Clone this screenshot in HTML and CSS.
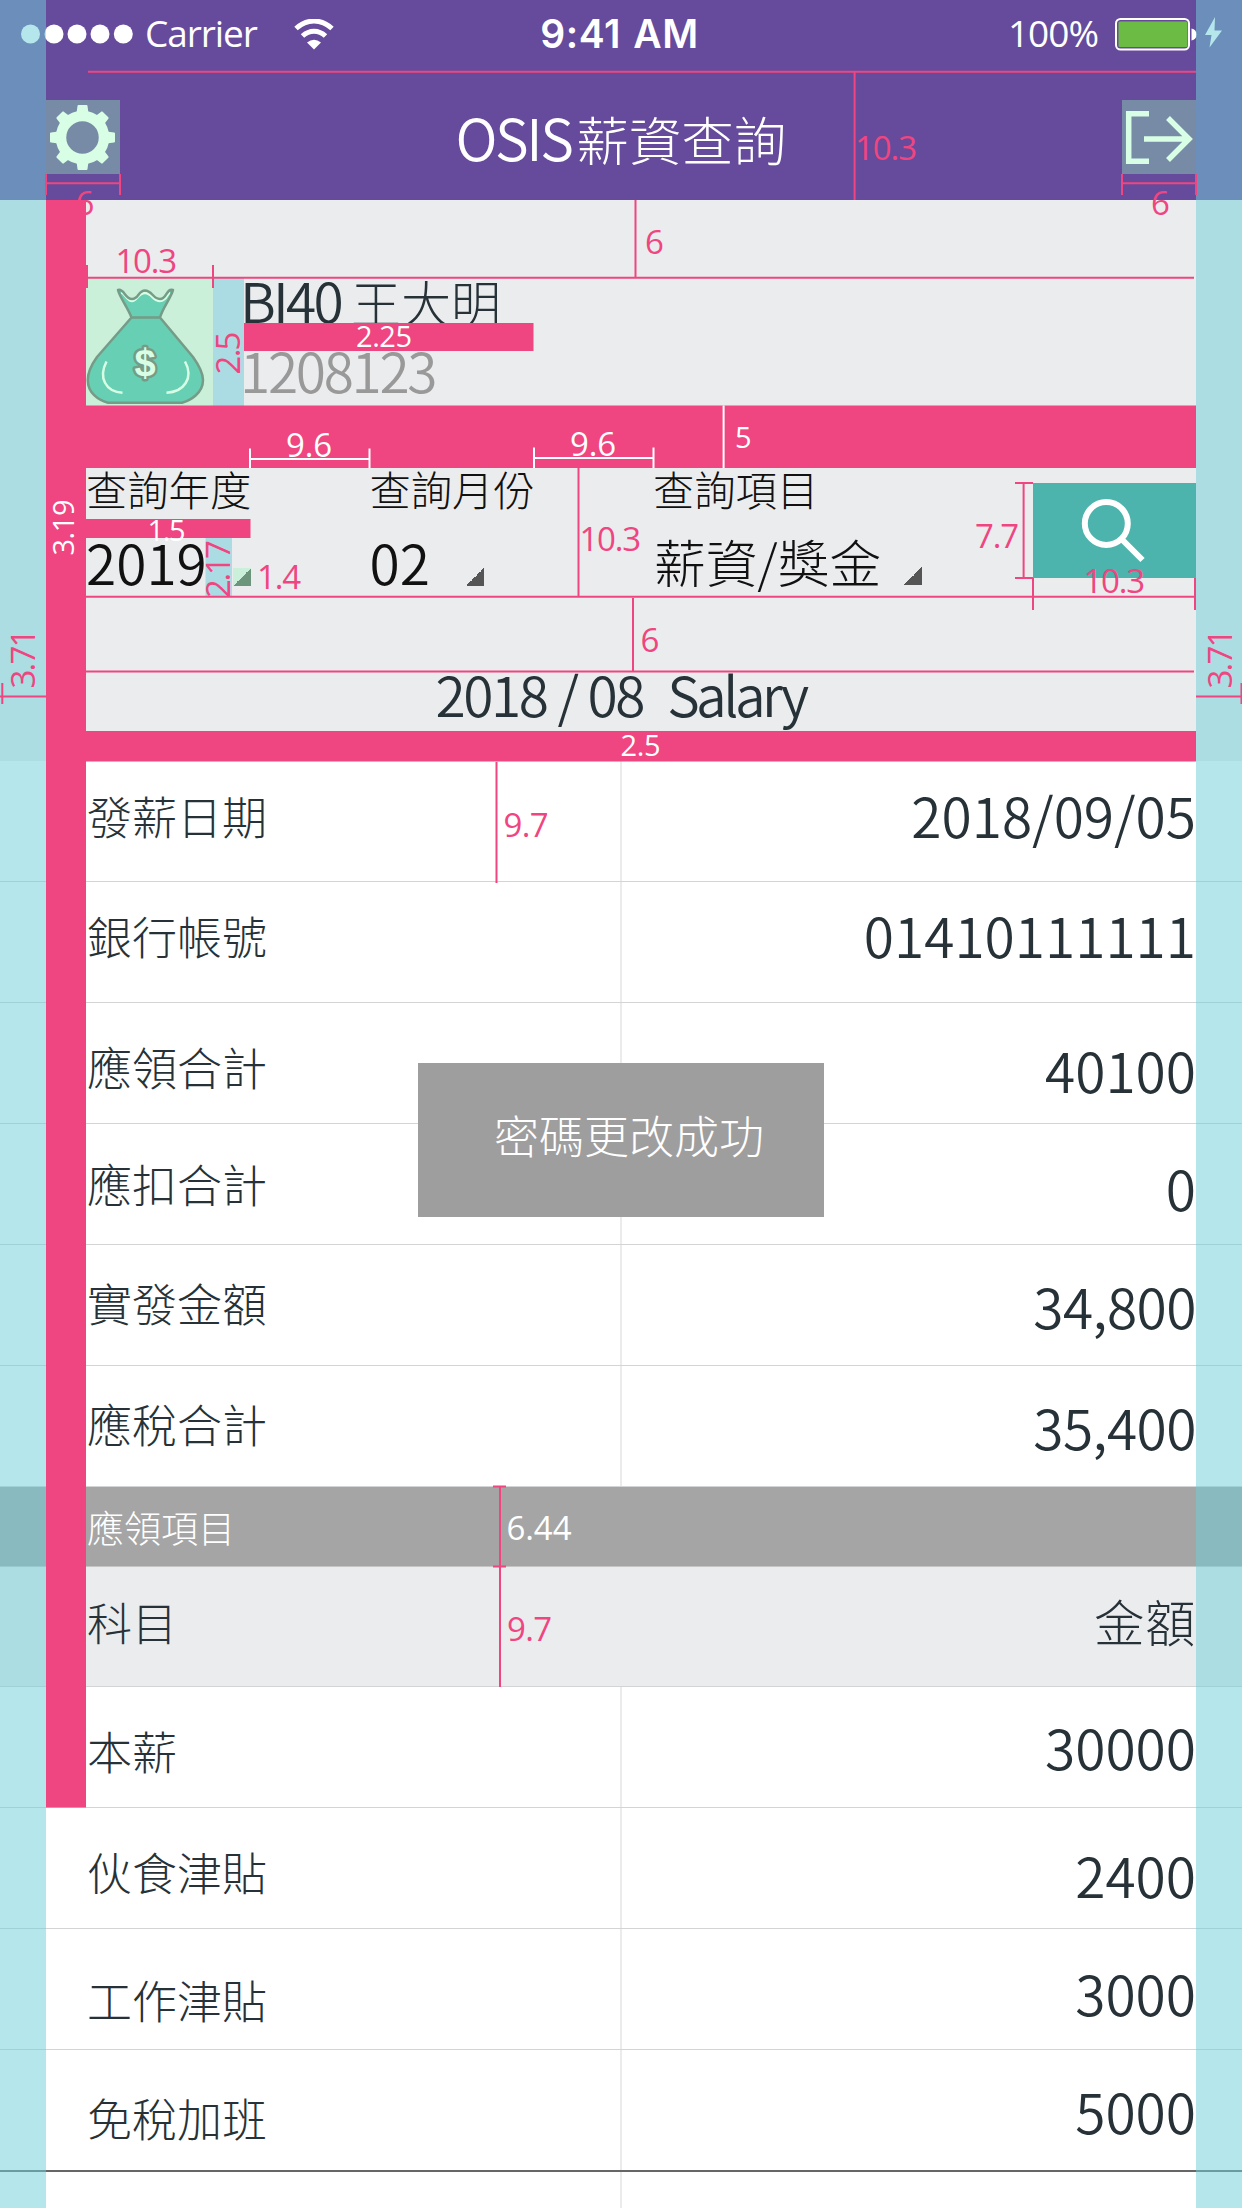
FILE: index.html
```html
<!DOCTYPE html>
<html lang="zh-Hant">
<head>
<meta charset="utf-8">
<title>OSIS薪資查詢</title>
<link rel="stylesheet" href="styles.css">
</head>
<body>
<div class="screen">
  <header class="header">
    <div class="status">
      <div class="status-left">
        <svg class="signal" width="114" height="20" viewBox="0 0 114 20"><circle cx="9.5" cy="10" r="9.5"/><circle cx="33" cy="10" r="9.5"/><circle cx="56" cy="10" r="9.5"/><circle cx="79" cy="10" r="9.5"/><circle cx="102.3" cy="10" r="9.5"/></svg>
        <span class="carrier">Carrier</span>
        <svg class="wifi" width="40" height="31" viewBox="0 0 40 31"><path d="M2 9.5C13-.5 27-.5 38 9.500" fill="none" stroke="#fff" stroke-width="5"/><path d="M8.500 17C15.500 10.500 24.500 10.500 31.500 17" fill="none" stroke="#fff" stroke-width="5"/><path d="M13 23.500Q20 18 27 23.500L20 30.500Z" fill="#fff"/></svg>
      </div>
      <div class="clock">9:41 AM</div>
      <div class="status-right">
        <span class="percent">100%</span>
        <svg class="battery" width="107" height="34" viewBox="0 0 107 34"><rect x="1" y="2" width="73" height="30.500" rx="4.500" fill="none" stroke="#fff" stroke-width="2"/><rect x="3.500" y="4.500" width="69" height="25.500" rx="1.500" fill="#6cbb45"/><path d="M76.500 11.500q5 1 5 6t-5 6z" fill="#fff"/><path d="M100 0L90 18H96.500L94.500 30.500L107 13.500H99.500Z" fill="#fff"/></svg>
      </div>
    </div>
    <nav class="navbar">
      <button class="tool" aria-label="設定">
        <svg width="74" height="74" viewBox="-36.500 -37.500 74 74">
          <g fill="#d8ffe5">
            <g id="teeth"><path id="tooth" d="M-6-24L-5-31.500Q-5-32.500-4-32.500H4Q5-32.500 5-31.500L6-24Z"/><use href="#tooth" transform="rotate(45)"/><use href="#tooth" transform="rotate(90)"/><use href="#tooth" transform="rotate(135)"/></g>
            <use href="#teeth" transform="rotate(180)"/>
          </g>
          <circle r="21.500" fill="none" stroke="#d8ffe5" stroke-width="10.500"/>
        </svg>
      </button>
      <h1 class="nav-title"><span class="latin">OSIS</span>薪資查詢</h1>
      <button class="tool" aria-label="登出">
        <svg width="74" height="74" viewBox="0 0 74 74" fill="none" stroke="#d8ffe5" stroke-width="5.500"><path d="M27 13.700H6.700V61.200H27M22 39H66M46 18L67 39L46 60"/></svg>
      </button>
    </nav>
  </header>

  <section class="summary">
    <div class="profile">
      <div class="avatar">
        <svg width="127" height="128" viewBox="86 278 127 128">
          <path d="M131.500 317.500C127 306 120 298 118 290C124 288 125 299 132 299S138 290.500 145 290.500S153 299 160 299S166 288 173 290C171 298 163 307 160 317.500L193 357C198 364 203 373 203 380C203 393 191 400 182 402.800H108C98 400 87.800 393 87.800 380C87.800 373 92 364 97 357Z" fill="#67cfb3"/>
          <path d="M121 292.500C125 293 127 301 132 301S138 293 145 293S153 301 160 301S167 293 170 292.500" fill="none" stroke="#d8ffe5" stroke-width="2.500"/>
          <path d="M131.500 317.500C127 306 120 298 118 290C124 288 125 299 132 299S138 290.500 145 290.500S153 299 160 299S166 288 173 290C171 298 163 307 160 317.500L193 357C198 364 203 373 203 380C203 393 191 400 182 402.800H108C98 400 87.800 393 87.800 380C87.800 373 92 364 97 357L131.500 317.500H160" fill="none" stroke="#769b87" stroke-width="2.500" stroke-linejoin="round"/>
          <path d="M106.500 361.500C98 378 106 392 122.500 392.700M185 361.500C194 378 184 392 166.500 392.700" fill="none" stroke="#d8ffe5" stroke-width="2.500"/>
          <text class="dollar" x="145" y="375.500">$</text>
        </svg>
      </div>
      <div class="identity">
        <div class="name"><span class="name-code">BI40</span> 王大明</div>
        <div class="staff-no">1208123</div>
      </div>
    </div>
    <div class="filters">
      <div class="filter filter-year"><div class="filter-label">查詢年度</div><div class="filter-value">2019<i class="corner corner-tint"></i></div></div>
      <div class="filter filter-month"><div class="filter-label">查詢月份</div><div class="filter-value">02<i class="corner"></i></div></div>
      <div class="filter filter-item"><div class="filter-label">查詢項目</div><div class="filter-value"><span class="filter-text">薪資/獎金</span><i class="corner"></i></div></div>
      <button class="search" aria-label="查詢">
        <svg width="163" height="95" viewBox="1033 483 163 95" fill="none" stroke="#fff" stroke-width="6"><circle cx="1106.300" cy="523.500" r="21.500"/><path d="M1121 538.500L1142.500 560"/></svg>
      </button>
    </div>
    <h2 class="period"><span class="period-date">2018 / 08</span><span class="period-kind">Salary</span></h2>
  </section>

  <main class="sheet">
    <div class="row r1"><span class="label">發薪日期</span><span class="value">2018/09/05</span></div>
    <div class="row r2"><span class="label">銀行帳號</span><span class="value">01410111111</span></div>
    <div class="row r3"><span class="label">應領合計</span><span class="value">40100</span></div>
    <div class="row r4"><span class="label">應扣合計</span><span class="value">0</span></div>
    <div class="row r5"><span class="label">實發金額</span><span class="value money">34,800</span></div>
    <div class="row r6"><span class="label">應稅合計</span><span class="value money">35,400</span></div>
    <div class="group">應領項目</div>
    <div class="row head"><span class="label">科目</span><span class="value">金額</span></div>
    <div class="row r7"><span class="label">本薪</span><span class="value">30000</span></div>
    <div class="row r8"><span class="label">伙食津貼</span><span class="value">2400</span></div>
    <div class="row r9"><span class="label">工作津貼</span><span class="value">3000</span></div>
    <div class="row r10"><span class="label">免稅加班</span><span class="value">5000</span></div>
    <div class="row rest"><span class="label"></span><span class="value"></span></div>
  </main>

  <div class="toast">密碼更改成功</div>

  <!-- spacing annotations, drawn over the whole screen -->
  <svg class="specs" width="1242" height="2208" viewBox="0 0 1242 2208">
    <g class="margin"><rect x="0" y="0" width="46" height="2208"/><rect x="1196" y="0" width="46" height="2208"/></g>
    <g class="gutter"><rect x="213" y="278" width="31" height="128"/><rect x="205.500" y="538" width="26.500" height="58"/></g>
    <g class="band">
      <rect x="46" y="200" width="40" height="1607.500"/>
      <rect x="86" y="405.500" width="1110" height="62.500"/>
      <rect x="86" y="731" width="1110" height="30.500"/>
      <rect x="244" y="323" width="289.500" height="28"/>
      <rect x="86" y="519" width="164.500" height="19"/>
    </g>
    <path class="rule" d="M88 71.700H1196M854.600 72V200M46 183.300H120M46 174V195M120 174V195M1122 183.300H1196M1122 174V195M1196 174V195M635.500 200V277M86 277.700H1194M87 265V288M213 265V288M578.500 468V596M86 596.700H1194M633 598V671M86 671.500H1194M1023.600 483V578M1015 483H1033M1015 578H1033M1033 578V610M1195 578V610M0 696.600H46M2.300 683V704M1196 696.600H1242M1241.500 683V704M496.500 762V883M500 1486V1687M493 1486.500H506M493 1566.500H506"/>
    <path class="rule light" d="M250 459H369.500M250 448.500V468M369.500 448.500V468M534 458H653.500M534 447.500V468M653.500 447.500V468M723.600 405.500V468"/>
    <g class="num">
      <text x="855" y="159.500" textLength="62">10.3</text>
      <text x="75.500" y="214.500">6</text>
      <text x="1151" y="214.500">6</text>
      <text x="645" y="253.500">6</text>
      <text x="115.500" y="273" textLength="61.500">10.3</text>
      <text transform="translate(240 374.500) rotate(-90)" textLength="43">2.5</text>
      <text transform="translate(35 688.500) rotate(-90)" textLength="60">3.71</text>
      <text transform="translate(1232 688.500) rotate(-90)" textLength="60">3.71</text>
      <text transform="translate(229.500 598) rotate(-90)" textLength="58">2.17</text>
      <text x="257" y="588.500" textLength="44">1.4</text>
      <text x="579.500" y="550.500" textLength="61.500">10.3</text>
      <text x="640.500" y="652">6</text>
      <text x="975" y="548" textLength="44">7.7</text>
      <text x="1083.500" y="593" textLength="61.500">10.3</text>
      <text x="503.500" y="837" textLength="45">9.7</text>
      <text x="507" y="1641" textLength="45">9.7</text>
    </g>
    <g class="num light">
      <text x="286" y="457" textLength="46">9.6</text>
      <text x="570" y="456" textLength="46">9.6</text>
      <text x="735" y="448" class="small">5</text>
      <text x="506.500" y="1540" textLength="65">6.44</text>
      <text x="356" y="347" class="small" textLength="56">2.25</text>
      <text x="147.500" y="540.500" class="small" textLength="38">1.5</text>
      <text x="620.500" y="755.500" class="small" textLength="40">2.5</text>
      <text transform="translate(74 555.500) rotate(-90)" class="small" textLength="56">3.19</text>
    </g>
  </svg>
</div>
</body>
</html>
```
FILE: styles.css
```css
* { box-sizing: border-box; }

body {
  margin: 0;
  background: #fff;
  color: #263238;
  font-family: "Noto Sans CJK TC", "Noto Sans", sans-serif;
  font-weight: 300;
}

h1, h2 { margin: 0; font-weight: 300; }

button { padding: 0; border: 0; font: inherit; }

svg { display: block; }

.screen {
  position: relative;
  width: 1242px;
  height: 2208px;
  overflow: hidden;
}

/* header */
.header { height: 200px; background: #664a9b; color: #fff; }

.status {
  display: grid;
  grid-template-columns: 1fr auto 1fr;
  align-items: center;
  height: 68px;
  padding: 0 20px 0 21px;
  font-family: "Open Sans", "Noto Sans", sans-serif;
  font-weight: 400;
}

.status-left, .status-right { display: flex; align-items: center; }
.status-right { justify-content: flex-end; }
.signal { fill: #fff; margin-right: 10px; }
.carrier { width: 111px; padding-bottom: 2px; font-size: 37px; letter-spacing: -1.100px; line-height: 64px; white-space: nowrap; }
.wifi { margin-left: 38px; }
.clock { padding: 0 4px 1px 0; font: 600 39px/66px Inter, "Liberation Sans", sans-serif; letter-spacing: .5px; word-spacing: 2px; }
.percent { padding-bottom: 2px; font-size: 37px; letter-spacing: -1px; line-height: 64px; margin-right: 17px; }

.navbar {
  display: flex;
  justify-content: space-between;
  align-items: center;
  height: 132px;
  padding: 6px 46px 0;
}

.tool { width: 74px; height: 74px; background: #778ba7; }

.nav-title { font-size: 52.500px; line-height: 72px; }
.latin { font-size: 57px; font-weight: 350; letter-spacing: -2.500px; margin-right: 5px; }

/* profile and filters */
.summary { height: 561px; padding: 78px 46px 0 86px; background: #ebecee; }

.profile { display: flex; height: 127.500px; }
.avatar { width: 127px; background: #caf0da; }
.dollar {
  font: 700 38px "Liberation Sans", sans-serif;
  text-anchor: middle;
  fill: #d8ffe5;
  stroke: #769b87;
  stroke-width: 5px;
  stroke-linejoin: round;
  paint-order: stroke;
}
.identity { padding-left: 27px; white-space: nowrap; }
.name { font-size: 50px; line-height: 43px; word-spacing: -1px; }
.name-code { font-size: 55px; font-weight: 350; letter-spacing: -2.800px; }
.staff-no { margin-top: 25px; font-size: 55px; font-weight: 350; line-height: 43px; letter-spacing: -2.300px; color: #999; }

.filters {
  display: grid;
  grid-template-columns: 283.500px 283.500px 380px 163px;
  height: 128.500px;
  margin-top: 62.500px;
  color: #111;
}
.filter-label { font-size: 41.300px; line-height: 41px; }
.filter-value {
  display: flex;
  justify-content: space-between;
  align-items: flex-end;
  margin-top: 27px;
  font-size: 55px;
  font-weight: 350;
  line-height: 50px;
  white-space: nowrap;
}
.filter-year .filter-value { width: 164.500px; }
.filter-month .filter-value { width: 114.500px; }
.filter-item .filter-value { width: 269px; }
.filter-text { height: 49px; padding-left: 1px; font-size: 51.700px; font-weight: 300; }
.corner { width: 18px; height: 18.500px; background: linear-gradient(135deg, transparent 50%, #555 50%); }
.corner-tint { background: linear-gradient(135deg, #caf0da 50%, #6d957b 50%); }
.search { height: 95px; margin-top: 15px; background: #4cb4ac; }

.period {
  display: flex;
  justify-content: center;
  gap: 24px;
  margin: 71px 41px 0 0;
  font-size: 55px;
  font-weight: 350;
  line-height: 50px;
  letter-spacing: -2.400px;
}
.period-date { word-spacing: 1px; }
.period-kind { letter-spacing: -3.600px; }

/* salary table */
.row {
  display: grid;
  grid-template-columns: 622px 1fr;
  height: 121px;
  border-bottom: 1px solid #d3d4d5;
  line-height: 60px;
  white-space: nowrap;
}
.label { padding-left: 87px; border-right: 2px solid #ebebeb; font-size: 45px; }
.value { padding-right: 46px; font-size: 55px; font-weight: 350; text-align: right; }
.money { letter-spacing: -.500px; }

.group {
  height: 80px;
  padding-left: 87px;
  border-bottom: 1px solid #c4c4c4;
  background: #a5a5a5;
  color: #fff;
  font-size: 37px;
  line-height: 80px;
}

.head { height: 120px; background: #ebecee; }
.head .label { border-color: transparent; }
.head .value { font-size: 50.500px; font-weight: 300; letter-spacing: .5px; }

.r1 .label { padding-top: 25px; }
.r1 .value { padding-top: 23px; }
.r2 .label { padding-top: 24px; }
.r2 .value { padding-top: 22px; }
.r3 .label { padding-top: 34px; }
.r3 .value { padding-top: 36px; }
.r4 .label { padding-top: 30px; }
.r4 .value { padding-top: 33px; }
.r5 .label { padding-top: 28px; }
.r5 .value { padding-top: 30px; }
.r6 .label { padding-top: 28px; }
.r6 .value { padding-top: 30px; }
.head .label { padding-top: 25px; }
.head .value { padding-top: 23px; }
.r7 .label { padding-top: 34px; }
.r7 .value { padding-top: 29px; }
.r8 .label { padding-top: 34px; }
.r8 .value { padding-top: 36px; }
.r9 .label { padding-top: 41px; }
.r9 .value { padding-top: 33px; }
.r10 { height: 122px; border-bottom: 2px solid #666; }
.r10 .label { padding-top: 38px; }
.r10 .value { padding-top: 30px; }
.rest { height: 37px; border: 0; }

.toast {
  position: absolute;
  left: 418px;
  top: 1063px;
  width: 406px;
  height: 154px;
  padding-left: 76px;
  background: #9e9e9e;
  color: #fff;
  font-size: 45px;
  line-height: 143px;
}

/* annotations */
.specs { position: absolute; left: 0; top: 0; }
.margin { fill: #71ced9; fill-opacity: .517; }
.gutter { fill: #acdce3; }
.band { fill: #ef4580; }
.rule { fill: none; stroke: #ef4580; stroke-width: 2; }
.rule.light { stroke: #fff; }
.num { fill: #ef4580; font: 400 33px "Open Sans", "Noto Sans", sans-serif; }
.num.light { fill: #fff; }
.num .small { font-size: 29px; }
```
